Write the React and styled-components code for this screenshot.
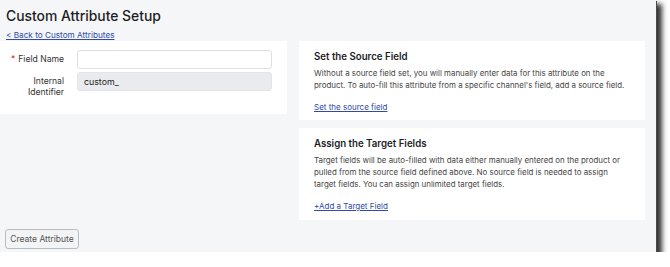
import React from 'react'
import styled, { createGlobalStyle } from 'styled-components'

const Global = createGlobalStyle`
  html, body {
    margin: 0;
    padding: 0;
    background: #ffffff;
  }
  body {
    font-family: Inter, "Liberation Sans", Arial, sans-serif;
    -webkit-font-smoothing: antialiased;
  }
`

const Frame = styled.div`
  width: 656px;
  height: 252px;
  box-sizing: border-box;
  background: #f5f6f8;
  box-shadow: 1px 1px 0 #4a4a4a, 5px 5px 5px 1px rgba(30, 30, 30, 0.9);
  display: flex;
  flex-direction: column;
  overflow: hidden;
`

const Header = styled.div`
  padding: 7px 6px 0;
`

const Title = styled.h1`
  margin: 0;
  font-size: 13.9px;
  font-weight: 500;
  line-height: 18px;
  color: #1d1d1f;
`

const Link = styled.a`
  display: block;
  color: #2f4aa8;
  text-decoration: underline;
  font-size: ${({ size }) => size || '8px'};
  line-height: 12px;
  cursor: pointer;
`

const BackLink = styled(Link)`
  margin-top: 4px;
`

const Columns = styled.div`
  display: grid;
  grid-template-columns: 287px 346px;
  column-gap: 12px;
  align-items: start;
`

const Card = styled.div`
  background: #ffffff;
  box-sizing: border-box;
  padding: ${({ pad }) => pad};
  height: ${({ h }) => h};
`

const FormCard = styled(Card)`
  display: flex;
  flex-direction: column;
  gap: 3px;
`

const Row = styled.div`
  display: grid;
  grid-template-columns: 64px 195px;
  column-gap: 13px;
  align-items: start;
`

const Label = styled.label`
  padding-top: 3.5px;
  font-size: 8.6px;
  line-height: 11.6px;
  color: #333;
  text-align: right;
`

const Star = styled.span`
  color: #d0342c;
  margin-right: 3px;
`

const Input = styled.div`
  height: 19px;
  box-sizing: border-box;
  border: 1px solid ${({ readOnly }) => (readOnly ? '#e3e5e8' : '#dcdfe3')};
  border-radius: 3px;
  background: ${({ readOnly }) => (readOnly ? '#e9ebee' : '#ffffff')};
  font-size: 8.8px;
  color: #222;
  padding: 0 6px;
  display: flex;
  align-items: center;
`

const RightCol = styled.div`
  display: flex;
  flex-direction: column;
  gap: 8px;
`

const CardTitle = styled.h2`
  margin: 0 0 3px;
  font-size: 9.7px;
  font-weight: 600;
  line-height: 14px;
  color: #1d1d1f;
`

const CardText = styled.p`
  margin: 0 0 10px;
  font-size: 7.9px;
  line-height: 12px;
  color: #444;
`

const Footer = styled.div`
  padding: 6px 5px 0;
`

const Button = styled.button`
  font-family: inherit;
  font-size: 8.5px;
  color: #555;
  background: #f3f4f6;
  border: 1px solid #b9bcc1;
  border-radius: 3px;
  height: 20px;
  width: 74px;
  padding: 0;
`

export default function App() {
  return (
    <>
      <Global />
      <Frame>
        <Header>
          <Title>Custom Attribute Setup</Title>
          <BackLink size="8.2px">&lt; Back to Custom Attributes</BackLink>
        </Header>
        <Columns>
          <FormCard pad="9px 15px 0 0" h="73px">
            <Row>
              <Label>
                <Star>*</Star>Field Name
              </Label>
              <Input />
            </Row>
            <Row>
              <Label>
                Internal
                <br />
                Identifier
              </Label>
              <Input readOnly>custom_</Input>
            </Row>
          </FormCard>
          <RightCol>
            <Card pad="9px 15px 0" h="79px">
              <CardTitle>Set the Source Field</CardTitle>
              <CardText>
                Without a source field set, you will manually enter data for this attribute on the
                product. To auto-fill this attribute from a specific channel's field, add a source field.
              </CardText>
              <Link>Set the source field</Link>
            </Card>
            <Card pad="9px 15px 0" h="92px">
              <CardTitle>Assign the Target Fields</CardTitle>
              <CardText>
                Target fields will be auto-filled with data either manually entered on the product or
                pulled from the source field defined above. No source field is needed to assign
                target fields. You can assign unlimited target fields.
              </CardText>
              <Link>+Add a Target Field</Link>
            </Card>
          </RightCol>
        </Columns>
        <Footer>
          <Button>Create Attribute</Button>
        </Footer>
      </Frame>
    </>
  )
}
